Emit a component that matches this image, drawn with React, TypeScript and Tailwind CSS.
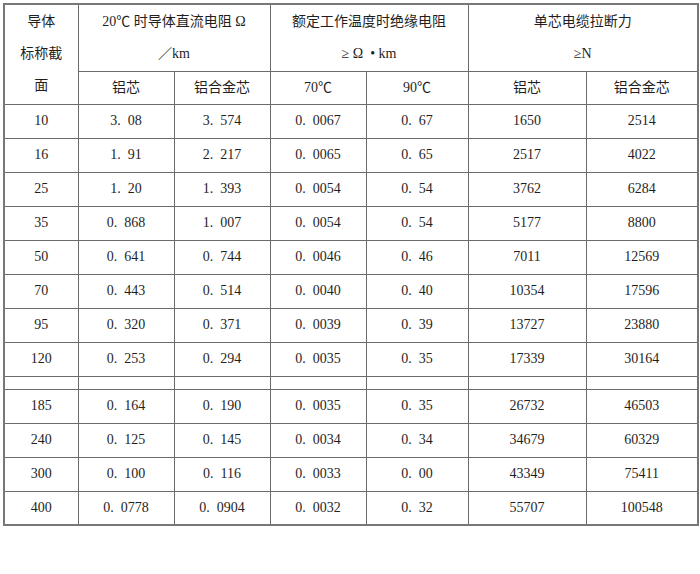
import React from "react"

// 铝芯 / 铝合金芯 电缆参数表
type Row = [string, string, string, string, string, string, string]

const ROWS_A: Row[] = [
  ["10", "3.08", "3.574", "0.0067", "0.67", "1650", "2514"],
  ["16", "1.91", "2.217", "0.0065", "0.65", "2517", "4022"],
  ["25", "1.20", "1.393", "0.0054", "0.54", "3762", "6284"],
  ["35", "0.868", "1.007", "0.0054", "0.54", "5177", "8800"],
  ["50", "0.641", "0.744", "0.0046", "0.46", "7011", "12569"],
  ["70", "0.443", "0.514", "0.0040", "0.40", "10354", "17596"],
  ["95", "0.320", "0.371", "0.0039", "0.39", "13727", "23880"],
  ["120", "0.253", "0.294", "0.0035", "0.35", "17339", "30164"],
]

const ROWS_B: Row[] = [
  ["185", "0.164", "0.190", "0.0035", "0.35", "26732", "46503"],
  ["240", "0.125", "0.145", "0.0034", "0.34", "34679", "60329"],
  ["300", "0.100", "0.116", "0.0033", "0.00", "43349", "75411"],
  ["400", "0.0778", "0.0904", "0.0032", "0.32", "55707", "100548"],
]

const cell = "border border-[#6b6b6b] p-0 text-center align-middle"

// 原表的小数点是全角样式：点后留出一段空白
const fmt = (v: string) => v.replace(".", ".\u2002")

function DataRow({ row }: { row: Row }) {
  return (
    <tr className="h-[34px]">
      {row.map((v, i) => (
        <td key={i} className={`${cell} whitespace-pre`}>
          {fmt(v)}
        </td>
      ))}
    </tr>
  )
}

export default function App() {
  return (
    <div
      className="h-[574px] w-[700px] bg-white pl-[3px] pt-[3px] text-[14px] text-[#1f1f1f]"
      style={{ fontFamily: '"Liberation Serif", "Noto Sans CJK SC", serif' }}
    >
      <table className="table-fixed border-collapse border-2 border-[#777] leading-[32px]">
        <colgroup>
          <col className="w-[74px]" />
          <col className="w-[96px]" />
          <col className="w-[96px]" />
          <col className="w-[96px]" />
          <col className="w-[102px]" />
          <col className="w-[118px]" />
          <col className="w-[112px]" />
        </colgroup>
        <thead>
          <tr className="h-[67px]">
            <th rowSpan={2} className={`${cell} font-normal`}>
              导体
              <br />
              标称截
              <br />面
            </th>
            <th colSpan={2} className={`${cell} font-normal`}>
              20℃ 时导体直流电阻 Ω
              <br />
              ／km
            </th>
            <th colSpan={2} className={`${cell} font-normal whitespace-pre`}>
              额定工作温度时绝缘电阻
              <br />
              {"≥ Ω  • km"}
            </th>
            <th colSpan={2} className={`${cell} font-normal`}>
              单芯电缆拉断力
              <br />
              ≥N
            </th>
          </tr>
          <tr className="h-[33px]">
            <th className={`${cell} font-normal`}>铝芯</th>
            <th className={`${cell} font-normal`}>铝合金芯</th>
            <th className={`${cell} font-normal`}>70℃</th>
            <th className={`${cell} font-normal`}>90℃</th>
            <th className={`${cell} font-normal`}>铝芯</th>
            <th className={`${cell} font-normal`}>铝合金芯</th>
          </tr>
        </thead>
        <tbody>
          {ROWS_A.map((r) => (
            <DataRow key={r[0]} row={r} />
          ))}
          {/* 空白间隔行 */}
          <tr className="h-[13px] leading-none">
            {Array.from({ length: 7 }).map((_, i) => (
              <td key={i} className={cell} />
            ))}
          </tr>
          {ROWS_B.map((r) => (
            <DataRow key={r[0]} row={r} />
          ))}
        </tbody>
      </table>
    </div>
  )
}
